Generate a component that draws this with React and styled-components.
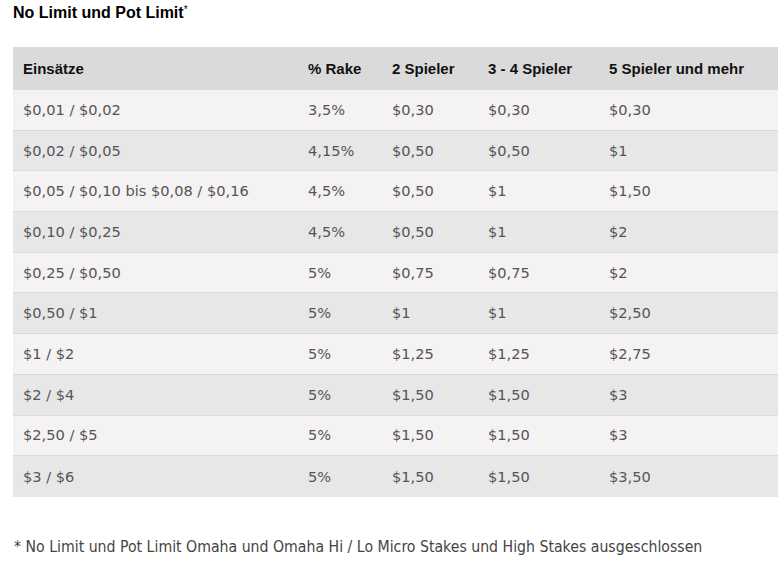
import React from "react";
import styled, { createGlobalStyle } from "styled-components";

const Global = createGlobalStyle`
  html, body { margin: 0; padding: 0; background: #ffffff; }
  body { font-family: "DejaVu Sans", Verdana, sans-serif; }
`;

const Page = styled.div`
  padding: 4px 0 0 13px;
  width: 780px;
  box-sizing: border-box;
`;

const Title = styled.h2`
  margin: 0;
  font-family: "Liberation Sans", Arial, sans-serif;
  font-weight: bold;
  font-size: 16px;
  line-height: 18px;
  color: #000;
  sup {
    font-size: 10px;
    font-weight: normal;
    vertical-align: top;
    line-height: 10px;
    position: relative;
    top: 1px;
  }
`;

const Table = styled.div`
  margin-top: 25px;
  width: 765px;
  display: grid;
  grid-template-columns: 285px 84px 96px 121px 179px;
`;

const Row = styled.div`
  display: contents;
`;

const HeadCell = styled.div`
  height: 43px;
  display: flex;
  align-items: center;
  padding-left: 10px;
  background: #dadada;
  font-family: "Liberation Sans", Arial, sans-serif;
  font-weight: bold;
  font-size: 15px;
  color: #111;
  box-sizing: border-box;
`;

const Cell = styled.div`
  height: 40.7px;
  box-sizing: border-box;
  display: flex;
  align-items: center;
  padding-left: 10px;
  padding-bottom: 1px;
  background: ${(p) => (p.$odd ? "#f4f2f2" : "#e8e7e7")};
  border-bottom: ${(p) => (p.$last ? "none" : "1px solid #dcdbdb")};
  font-size: 14.6px;
  color: #555;
  white-space: nowrap;
`;

const Footnote = styled.p`
  margin: 40px 0 0 1px;
  font-family: "DejaVu Sans Condensed", "DejaVu Sans", sans-serif;
  font-stretch: condensed;
  font-size: 15.7px;
  line-height: 20px;
  color: #444;
  white-space: nowrap;
`;

const headers = ["Einsätze", "% Rake", "2 Spieler", "3 - 4 Spieler", "5 Spieler und mehr"];

const rows = [
  ["$0,01 / $0,02", "3,5%", "$0,30", "$0,30", "$0,30"],
  ["$0,02 / $0,05", "4,15%", "$0,50", "$0,50", "$1"],
  ["$0,05 / $0,10 bis $0,08 / $0,16", "4,5%", "$0,50", "$1", "$1,50"],
  ["$0,10 / $0,25", "4,5%", "$0,50", "$1", "$2"],
  ["$0,25 / $0,50", "5%", "$0,75", "$0,75", "$2"],
  ["$0,50 / $1", "5%", "$1", "$1", "$2,50"],
  ["$1 / $2", "5%", "$1,25", "$1,25", "$2,75"],
  ["$2 / $4", "5%", "$1,50", "$1,50", "$3"],
  ["$2,50 / $5", "5%", "$1,50", "$1,50", "$3"],
  ["$3 / $6", "5%", "$1,50", "$1,50", "$3,50"],
];

export default function App() {
  return (
    <>
      <Global />
      <Page>
        <Title>
          No Limit und Pot Limit<sup>*</sup>
        </Title>
        <Table>
          <Row>
            {headers.map((h) => (
              <HeadCell key={h}>{h}</HeadCell>
            ))}
          </Row>
          {rows.map((r, i) => (
            <Row key={i}>
              {r.map((c, j) => (
                <Cell key={j} $odd={i % 2 === 0} $last={i === rows.length - 1}>
                  {c}
                </Cell>
              ))}
            </Row>
          ))}
        </Table>
        <Footnote>
          * No Limit und Pot Limit Omaha und Omaha Hi / Lo Micro Stakes und High Stakes ausgeschlossen
        </Footnote>
      </Page>
    </>
  );
}
